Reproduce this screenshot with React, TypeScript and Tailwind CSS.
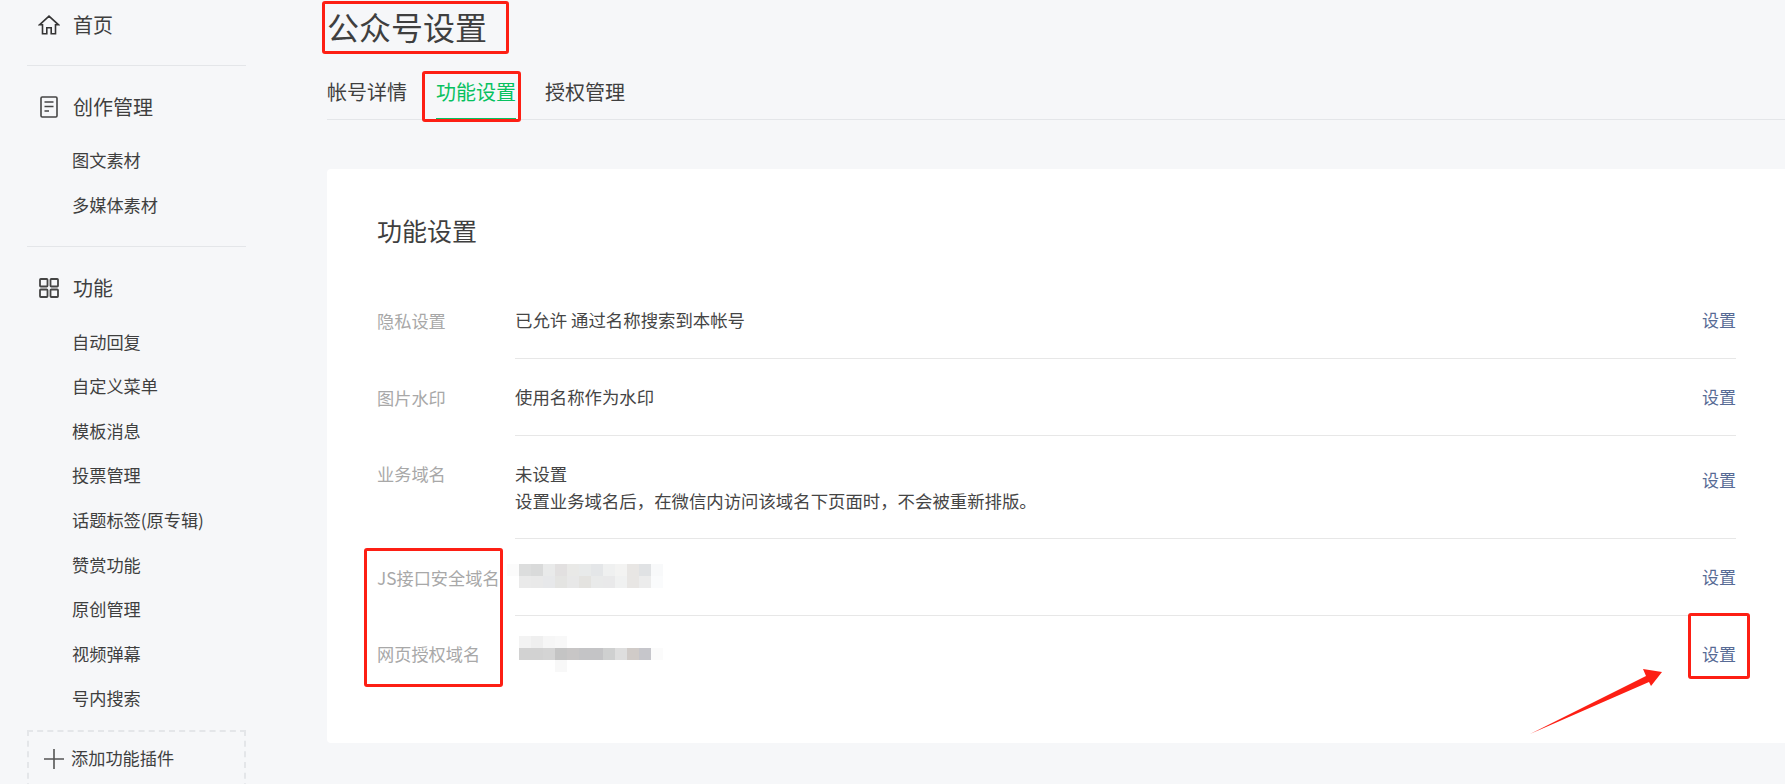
const font = '[font-family:"Noto_Sans_CJK_SC","Liberation_Sans",sans-serif]';

const HomeIcon = () => (
  <svg width="22" height="20" viewBox="0 0 22 20" fill="none" stroke="#353535" strokeWidth="1.6" strokeLinejoin="miter">
    <path d="M1.500 9.800 11 1.200l9.500 8.600h-3v8.900h-4.300v-6h-4.400v6H4.500v-8.900z" />
  </svg>
);
const DocIcon = () => (
  <svg width="18" height="22" viewBox="0 0 18 22" fill="none" stroke="#454545" strokeWidth="1.6">
    <rect x="1" y="1" width="16" height="20" rx="1.200" />
    <path d="M4.500 6h9M4.500 10.500h9M4.500 15h4.500" />
  </svg>
);
const GridIcon = () => (
  <svg width="20" height="20" viewBox="0 0 20 20" fill="none" stroke="#454545" strokeWidth="1.8">
    <rect x="1" y="1" width="7.500" height="7.500" rx="0.800" />
    <rect x="11.500" y="1" width="7.500" height="7.500" rx="0.800" />
    <rect x="1" y="11.500" width="7.500" height="7.500" rx="0.800" />
    <rect x="11.500" y="11.500" width="7.500" height="7.500" rx="0.800" />
  </svg>
);

function NavHead({ icon, label }: { icon: React.ReactNode; label: string }) {
  return (
    <div className="flex h-[50px] items-center text-[20px] text-[#3f3f3f]">
      <span className="flex w-[46px] justify-center pr-[6px] pl-[3px]">{icon}</span>
      {label}
    </div>
  );
}
function NavSub({ label }: { label: string }) {
  return <div className="flex h-[44.6px] items-center pl-[45px] text-[17.2px] text-[#3f3f3f]">{label}</div>;
}
const Divider = () => <div className="h-px bg-[#e4e6e9]" />;

const W = '#ffffff';
const mosaic1 = [
  ['#fbfbfb', '#dcdddd', '#d9dada', '#e9eaea', '#e2e0e0', '#e9e9e7', '#e8eaea', '#e4e6e8', '#eff0f0', '#f3f3f2', '#e8e6e4', '#e0e2e4', '#f8f9fa'],
  [W, '#eaeaea', '#e9e9e9', '#e7e8ea', '#e4e4e2', '#e8e8e8', '#e4e3e0', '#e9eaea', '#e9e9ea', '#f0f1f1', '#e8e6e4', '#ececec', '#fafbfc'],
];
const mosaic2 = [
  [W, '#f3f3f3', '#efefef', '#f6f6f6', '#f8f8f8', W, W, W, W, W, W, W, W],
  [W, '#d2d2d2', '#d2d2d2', '#d4d4d4', '#c4c4c4', '#c8c6c6', '#c4c4c6', '#c4c4c6', '#cfd0d0', '#dedede', '#d0cbc8', '#c6c6cb', '#fbfbfb'],
  [W, W, W, W, '#f8f8f8', W, W, W, W, W, W, W, W],
];

function Mosaic({ rows }: { rows: string[][] }) {
  return (
    <div className="flex flex-col">
      {rows.map((row, i) => (
        <div key={i} className="flex">
          {row.map((c, j) => (
            <div key={j} className="h-3 w-3" style={{ backgroundColor: c }} />
          ))}
        </div>
      ))}
    </div>
  );
}

function Row({
  label,
  children,
  h,
  last,
  top,
}: {
  label: string;
  children: React.ReactNode;
  h: string;
  last?: boolean;
  top?: boolean;
}) {
  return (
    <div className={`flex ${h}`}>
      <div className={`w-[138px] shrink-0 text-[17.2px] text-[#a8a8a8] ${top ? 'pt-[25px]' : 'flex items-center'}`}>
        {label}
      </div>
      <div
        className={`flex flex-1 items-center justify-between text-[#454545] ${last ? '' : 'border-b border-[#e7e7e7]'}`}
      >
        <div className={`text-[17.4px] leading-[27px] ${top || last ? '' : 'pb-[2px]'}`}>{children}</div>
        <a className={`text-[17px] text-[#576b95] ${top ? 'mb-[14px]' : last ? '' : 'mb-[1px]'}`}>设置</a>
      </div>
    </div>
  );
}

const RedBox = ({ className }: { className: string }) => (
  <div className={`absolute rounded-[3px] border-[3px] border-[#fd1f14] ${className}`} />
);

export default function App() {
  return (
    <div className={`relative flex h-[784px] w-[1785px] overflow-hidden bg-[#f6f7f9] ${font}`}>
      <aside className="ml-[27px] w-[219px] shrink-0">
        <NavHead icon={<HomeIcon />} label="首页" />
        <div className="mt-[15px]"><Divider /></div>
        <div className="mt-[16px]"><NavHead icon={<DocIcon />} label="创作管理" /></div>
        <div className="mt-[6px] mb-[19px]">
          <NavSub label="图文素材" />
          <NavSub label="多媒体素材" />
        </div>
        <Divider />
        <div className="mt-[16px]"><NavHead icon={<GridIcon />} label="功能" /></div>
        <div className="mt-[6px] mb-[9px]">
          {['自动回复', '自定义菜单', '模板消息', '投票管理', '话题标签(原专辑)', '赞赏功能', '原创管理', '视频弹幕', '号内搜索'].map((t) => (
            <NavSub key={t} label={t} />
          ))}
        </div>
        <div className="flex h-[70px] items-start border-2 border-dashed border-[#e4e6e9] pt-[13px] pl-[15px] text-[17.2px] text-[#3f3f3f]">
          <svg width="20" height="20" viewBox="0 0 20 20" stroke="#555" strokeWidth="1.6" className="mt-[4px] mr-[7px]">
            <path d="M0 10h20M10 0v20" />
          </svg>
          添加功能插件
        </div>
      </aside>

      <main className="ml-[81px] flex-1">
        <h1 className="flex h-[52px] items-center text-[32px] font-normal text-[#3f3f3f]">公众号设置</h1>
        <div className="mt-[13px] flex h-[55px] gap-[29px] border-b border-[#e4e6e9] text-[20px] text-[#3f3f3f]">
          <div className="flex h-[55px] w-[80px] items-center justify-center pb-[2px]">帐号详情</div>
          <div className="flex h-[55px] w-[80px] items-center justify-center border-b-2 border-[#07c160] text-[#07c160]">功能设置</div>
          <div className="flex h-[55px] w-[80px] items-center justify-center pb-[2px]">授权管理</div>
        </div>
        <section className="mt-[49px] h-[574px] rounded-l-[4px] bg-white pr-[49px] pl-[50px]">
          <h2 className="flex h-[113px] items-start pt-[39px] text-[25px] leading-[44px] font-normal text-[#3f3f3f]">功能设置</h2>
          <Row label="隐私设置" h="h-[77px]">已允许 通过名称搜索到本帐号</Row>
          <Row label="图片水印" h="h-[77px]">使用名称作为水印</Row>
          <Row label="业务域名" h="h-[103px]" top>
            未设置
            <br />
            设置业务域名后，在微信内访问该域名下页面时，不会被重新排版。
          </Row>
          <Row label="JS接口安全域名" h="h-[77px]"><div className="-ml-[8px]"><Mosaic rows={mosaic1} /></div></Row>
          <Row label="网页授权域名" h="h-[76px]" last><div className="-ml-[8px]"><Mosaic rows={mosaic2} /></div></Row>
        </section>
      </main>

      <RedBox className="top-px left-[322px] h-[53px] w-[187px]" />
      <RedBox className="top-[71px] left-[422px] h-[51px] w-[99px]" />
      <RedBox className="top-[548px] left-[364px] h-[139px] w-[139px]" />
      <RedBox className="top-[613px] left-[1688px] h-[66px] w-[62px]" />
      <svg className="absolute top-[665px] left-[1530px]" width="135" height="70" viewBox="0 0 135 70">
        <polygon points="0,69 116,11 113,4 132,7 121,21 119,17" fill="#fd1f14" />
      </svg>
    </div>
  );
}
